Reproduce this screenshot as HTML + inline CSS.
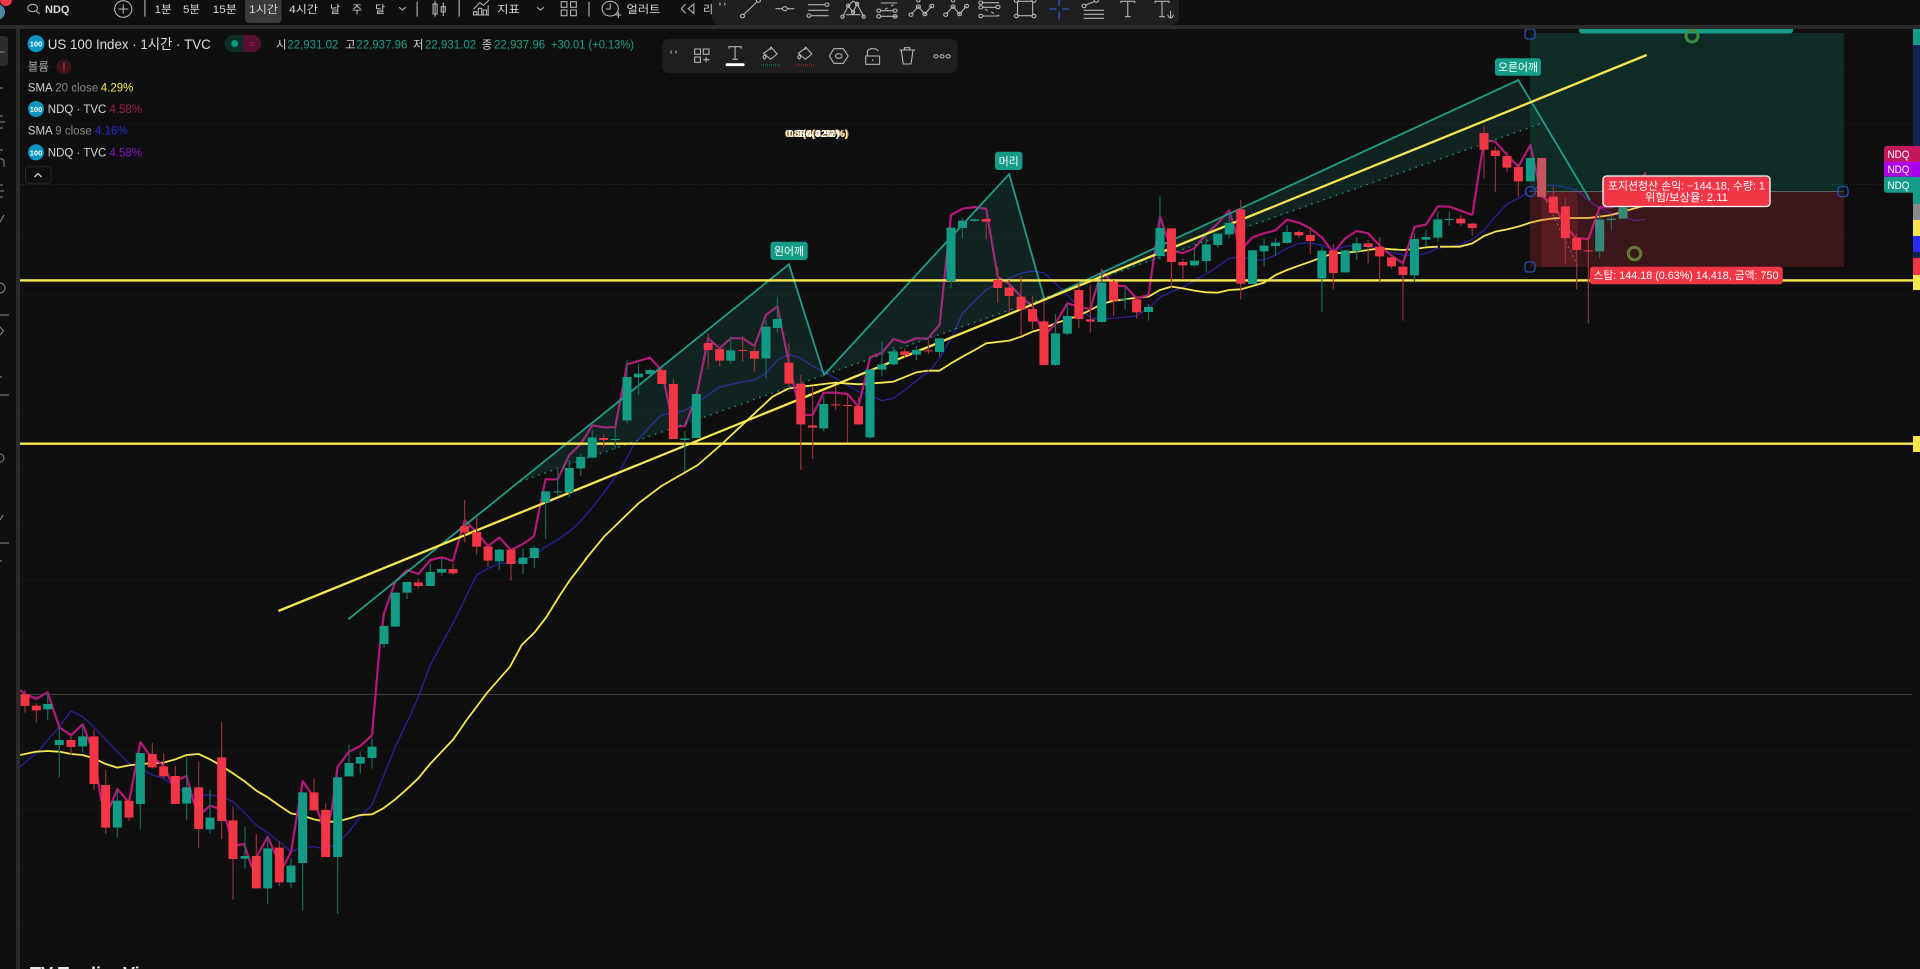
<!DOCTYPE html>
<html lang="ko"><head><meta charset="utf-8"><title>US 100 Index</title>
<style>
html,body{margin:0;padding:0;background:#0f0f0f;width:1920px;height:969px;overflow:hidden}
svg{display:block;font-family:"Liberation Sans","Noto Sans CJK KR",sans-serif}
path,polyline,circle,ellipse,rect.i{vector-effect:non-scaling-stroke}
polyline,.n{fill:none}
.gw{stroke:#17695c;stroke-width:1.2;fill:none}.gb{stroke:#129b85;stroke-width:9;fill:none}
.rw{stroke:#98303c;stroke-width:1.2;fill:none}.rb{stroke:#f23645;stroke-width:9;fill:none}
.p{stroke:#b5177c;stroke-width:2.2;stroke-linejoin:round}
.b{stroke:#2a22a8;stroke-width:1.2;stroke-linejoin:round}
.y{stroke:#f7e650;stroke-width:1.8;stroke-linejoin:round}
.ic{fill:none;stroke:#b4b4b4;stroke-width:1.1}
.t{fill:#d6d6d6;font-size:11px}
.v{fill:#1b9c85;font-size:11.5px}.k{fill:#d0d0d0;font-size:11.5px}
.w{fill:#fff;font-size:11px;text-anchor:middle}
</style></head><body>
<svg width="1920" height="969" viewBox="0 0 1920 969" xmlns="http://www.w3.org/2000/svg">
<rect width="1920" height="969" fill="#0f0f0f"/>
<!-- grid -->
<path d="M20 67H1912M20 124H1912M20 238H1912M20 295H1912M20 352H1912M20 410H1912M20 467H1912M20 523H1912M20 580H1912M20 637H1912M20 751H1912M20 809H1912M20 866H1912M20 922H1912" stroke="#161616" stroke-width="1" fill="none"/>
<path d="M20 184.500H1912" stroke="#173a32" stroke-width="1" stroke-dasharray="1 2" fill="none"/>
<path d="M20 694.500H1912" stroke="#3e3e3e" stroke-width="1" fill="none"/>

<!-- moving averages -->
<g transform="translate(0 640) scale(.33333)">
<polyline class="b" points="60,380 109,340 178,260 213,213 248,230 282,262 352,335 387,370 421,385 457,405 491,415 526,440 560,462 596,465 630,465 665,470 699,485 735,520 769,555 803,578 838,605 873,635 908,622 942,620 977,628 1013,610 1047,575 1081,530 1116,495 1150,410 1186,320 1224,240"/>
<polyline class="y" points="60,345 109,335 143,333 178,335 213,342 248,345 282,355 317,372 352,383 387,376 421,372 457,370 491,368 526,358 560,345 596,342 630,358 665,378 699,400 735,425 769,452 803,472 838,497 873,520 908,527 942,538 977,545 1013,545 1047,535 1081,525 1116,523 1150,505 1186,478 1220,448 1255,415 1290,372 1360,298 1400,240"/>
<polyline class="p" points="60,150 75,163 109,176 143,157 178,262 213,286 248,253 282,340 303,480 330,500 352,447 387,487 421,306 445,340 491,378 515,428 560,408 582,490 610,515 630,497 655,505 680,545 699,618 732,612 755,680 803,590 825,640 850,680 873,636 908,423 932,458 960,530 977,590 995,510 1013,380 1047,335 1081,318 1116,286"/>
</g>
<g transform="translate(270 480) scale(.33333)">
<polyline class="b" points="415,720 445,650 481,555 549,430 620,285 654,265 688,250 723,250 759,240 793,225 827,200 862,180 898,155 930,125 965,85 1000,40"/>
<polyline class="y" points="590,720 650,640 720,560 755,495 793,458 830,410 870,345 900,300 950,235"/>
<polyline class="p" points="306,766 310,720 330,490 342,400 376,305 411,270 445,282 481,240 515,232 549,243 584,120 620,158 654,198 688,173 723,210 759,192 793,168"/>
</g>
<g transform="translate(340 240) scale(.38271 .33333)">
<polyline class="b" points="688,760 730,695 770,610 810,560 840,525 901,512 931,490 990,442 1052,425 1083,420 1113,400 1143,360 1173,343 1204,355 1235,378 1264,395 1295,415 1326,435 1355,455 1385,465 1416,482 1446,475 1476,450 1536,395"/>
<polyline class="y" points="640,960 690,890 780,790 840,738 935,675 995,615 1060,545 1130,470 1173,445 1264,432 1295,428 1355,433 1416,428 1446,425 1506,397 1536,392"/>
<polyline class="p" points="507,888 537,718 569,718 599,645 629,612 659,556 689,562 719,562 750,373 810,353 841,392 871,560 901,558 931,470 962,295 992,325 1021,295 1052,295 1083,318 1113,225 1143,199 1173,370 1204,525 1235,525 1264,458 1295,458 1326,462 1355,500 1385,352 1416,338 1446,297 1476,308 1506,295 1536,296 1566,255"/>
</g>
<g transform="translate(920 150) scale(.38271 .33333)">
<polyline class="b" points="22,668 51,625 81,565 111,490 143,452 173,420 203,400 233,385 264,370 294,363 324,368 354,400 385,435 415,470 445,503 475,507 506,505 536,502 566,498 597,475 627,442 657,425 687,412 717,392 748,372 778,350 808,325 838,320 869,330 899,330 929,315 959,295 990,280 1020,280 1050,285 1080,300 1111,290 1141,285 1171,290 1201,295 1232,308 1262,315 1292,318 1322,310 1353,295"/>
<polyline class="y" points="22,662 51,662 81,640 111,620 143,600 173,580 233,572 264,560 294,545 324,535 354,520 385,508 415,497 445,480 475,462 506,452 536,448 566,443 597,440 627,420 657,410 687,415 717,422 748,427 778,428 808,420 838,418 869,408 899,398 929,375 959,360 990,347 1020,335 1050,322 1080,310 1111,308 1141,305 1171,300 1201,295 1232,298 1262,300 1292,297 1322,292 1353,290"/>
<polyline class="p" points="51,527 81,195 111,176 143,171 173,177 203,380 233,402 264,440 294,470 324,560 354,520 385,460 415,470 445,478 475,360 506,408 536,408 566,445 597,435 627,198 657,302 687,309 717,295 748,252 778,220 808,181 838,300 869,262 899,250 929,241 959,209 990,218 1020,235 1050,262 1080,308 1111,265 1141,243 1171,250 1201,287 1232,317 1262,340 1292,231 1322,224 1353,169 1383,170 1413,182 1443,195"/>
</g>
<g transform="translate(1440 0) scale(.33333)">
<polyline class="b" points="-7,745 60,735 97,718 132,690 166,650 201,612 235,595 271,572 305,555 340,556 376,562 410,570 445,600 479,625 514,640 549,650 583,662 618,658"/>
<polyline class="y" points="0,740 60,740 97,730 132,708 166,695 201,688 235,680 271,668 305,660 340,655 376,654 410,654 445,654 479,650 514,645 549,635 583,625 610,618"/>
<polyline class="p" points="97,646 132,420 166,425 201,465 235,500 271,435 305,590 340,610 376,680 410,715 445,717 479,622 514,622 549,610 583,560 618,517"/>
</g>

<!-- position tool -->
<rect x="1530" y="33" width="314" height="158" fill="#089981" fill-opacity=".2"/>
<rect x="1530" y="191" width="314" height="76" fill="#f23645" fill-opacity=".2"/>
<rect x="1541.700" y="191" width="35.500" height="76" fill="#f23645" fill-opacity=".16"/>
<path d="M1530 191.500H1844" stroke="#5f5f5f" fill="none"/>
<path d="M1542 192L1578 267" stroke="#8a6a6a" stroke-dasharray="2 3" fill="none"/>

<!-- head & shoulders -->
<path d="M520 481.700L789 264.300L824 375Z M824 375L1009.200 174L1044.400 299.300Z M1044.400 299.300L1518.300 80L1541.700 123.300Z" fill="#1d9b85" fill-opacity=".15"/>
<path d="M348.300 619.300L789 264.300L824 375L1009.200 174L1044.400 299.300L1518.300 80L1590 200" fill="none" stroke="#1f9d87" stroke-width="1.800"/>
<path d="M520 481.700L1541.700 123.300" fill="none" stroke="#1f9d87" stroke-width="1.300" stroke-dasharray="1.500 5"/>

<!-- horizontal lines and trend line -->
<path d="M278.300 611L1646.700 55" stroke="#f7e650" stroke-width="2.300" fill="none"/>
<rect x="20" y="279.200" width="1893" height="2.400" fill="#f7e650"/>
<rect x="20" y="442.500" width="1893" height="2.400" fill="#f7e650"/>

<!-- candles -->
<g transform="translate(0 640) scale(.33333)">
<path class="gw" d="M143 160V240M178 260V412M248 255V338M352 450V593M421 339V566M560 350V540M630 450V580M735 560V686M803 590V792M873 655V745M908 455V812M1013 410V822M1047 315V409M1081 335V400M1116 295V386"/>
<path class="rw" d="M75 150V218M109 190V248M213 285V345M282 268V450M317 390V582M387 470V543M457 308V386M491 340V415M526 378V492M596 365V624M665 246V597M699 500V778M769 582V745M838 605V738M942 415V511M977 490V651"/>
<path class="gb" d="M143 192V208M178 300V315M248 289V319M352 482V563M421 339V492M560 442V491M630 533V568M735 648V656M803 625V745M873 677V727M908 457V669M1013 412V651M1047 369V409M1081 351V371M1116 320V354"/>
<path class="rb" d="M75 163V198M109 197V211M213 300V321M282 289V432M317 435V563M387 482V533M457 342V382M491 379V409M526 408V492M596 442V567M665 352V543M699 541V657M769 648V745M838 623V727M942 457V511M977 510V651"/>
</g>
<g transform="translate(270 480) scale(.33333)">
<path class="gw" d="M342 437V502M376 338V440M411 305V357M481 252V318M515 235V287M688 205V270M759 205V282M793 198V264M827 34V177"/>
<path class="rw" d="M445 295V325M549 250V284M584 60V188M620 112V224M654 198V260M723 209V302"/>
<path class="gb" d="M342 438V492M376 338V440M411 306V338M481 276V318M515 267V278M688 209V244M759 233V252M793 204V234M827 34V67"/>
<path class="rb" d="M445 307V318M549 267V280M584 138V157M620 156V200M654 199V242M723 209V252"/>
</g>
<g transform="translate(340 240) scale(.38271 .33333)">
<path class="gw" d="M569 690V770M599 660V772M629 640V708M659 570V655M719 565V628M750 360V550M780 372V465M810 385V405M901 572V695M931 460V596M1021 290V372M1113 240V415M1143 170V278M1264 470V575M1385 388V597M1416 305V410M1446 320V375M1506 318V360"/>
<path class="rw" d="M689 580V622M841 385V432M871 418V597M962 280V388M992 320V378M1052 288V365M1083 320V395M1173 310V445M1204 405V690M1235 440V657M1295 440V510M1326 460V608M1355 470V555M1476 325V355"/>
<path class="gb" d="M569 754V757M599 684V757M629 651V685M659 592V653M719 597V600M750 411V541M780 401V412M810 390V402M901 595V600M931 462V594M1021 331V362M1113 260V355M1143 237V264M1264 492V565M1385 388V592M1416 373V389M1446 334V373M1506 330V344"/>
<path class="rb" d="M689 594V600M841 390V432M871 432V597M962 309V330M992 327V362M1052 330V333M1083 333V356M1173 368V431M1204 431V553M1235 556V563M1295 493V496M1326 495V498M1355 498V553M1476 334V345"/>
</g>
<g transform="translate(920 150) scale(.38271 .33333)">
<path class="gw" d="M51 562V620M81 232V415M111 205V265M143 205V215M354 492V648M385 460V555M475 360V518M536 408V478M597 462V512M627 140V330M717 298V350M748 255V365M778 250V292M808 190V265M869 300V402M899 265V350M929 265V318M959 225V280M1050 290V485M1111 300V368M1141 262V330M1292 250V395M1322 240V290M1353 185V275M1383 185V228"/>
<path class="rw" d="M22 570V612M173 205V268M203 352V458M233 390V488M264 378V558M294 438V538M324 455V645M415 398V535M445 405V548M506 390V498M566 440V506M657 235V415M687 325V388M838 150V448M990 240V262M1020 232V312M1080 282V418M1171 270V340M1201 262V398M1232 315V355M1262 330V512M1413 195V228M1443 218V258"/>
<path class="gb" d="M51 565V606M81 233V393M111 212V234M143 208V213M354 550V645M385 498V551M475 398V516M536 447V450M597 471V486M627 234V318M717 332V346M748 283V333M778 251V285M808 219V253M869 301V402M899 287V304M929 278V288M959 246V279M1050 302V385M1111 301V367M1141 280V304M1292 267V376M1322 261V269M1353 208V263M1383 207V210"/>
<path class="rb" d="M22 601V604M173 207V215M203 390V414M233 413V438M264 440V478M294 477V515M324 514V645M415 420V507M445 508V515M506 395V452M566 448V487M657 235V336M687 336V346M838 178V401M990 246V256M1020 255V273M1080 302V369M1171 280V291M1201 290V319M1232 322V349M1262 350V375M1413 206V220M1443 221V234"/>
</g>
<g transform="translate(1440 0) scale(.33333)">
<path class="rw" d="M132 375V535M166 440V576M201 455V515M235 490V590M340 560V640M376 595V790M410 700V868M445 720V970"/>
<path class="gw" d="M271 470V544M479 640V775M514 645V692M549 610V656"/>
<path class="gb" d="M271 474V544"/>
<path d="M479 659V754M514 656V660M549 622V656" fill="none" stroke="#36887a" stroke-width="9"/>
<path d="M305 474V591" fill="none" stroke="#c9525f" stroke-width="9"/>
<path class="rb" d="M132 399V449M166 451V468M201 468V503M235 501V544M340 590V639M376 619V714M410 713V750M445 751V754"/>
</g>

<!-- position handles -->
<g fill="#0f0f0f" fill-opacity=".3" stroke="#2352b5" stroke-width="1.300">
<rect x="1525" y="29" width="10" height="10" rx="3"/>
<rect x="1525" y="262" width="10" height="10" rx="3"/>
<rect x="1838" y="186.500" width="10" height="10" rx="3"/>
<circle cx="1530.500" cy="191.500" r="5"/>
</g>
<rect x="1579" y="24" width="214" height="9.500" rx="3" fill="#149c88"/>
<circle cx="1692" cy="36" r="6" fill="none" stroke="#3c8c3f" stroke-width="3"/>
<circle cx="1634.500" cy="253.500" r="6.200" fill="none" stroke="#5f7b36" stroke-width="3"/>

<!-- pattern labels -->
<rect x="770.500" y="241.700" width="37.200" height="18.300" rx="3" fill="#149c88"/>
<text class="w" x="789" y="255" textLength="30" lengthAdjust="spacingAndGlyphs">왼어깨</text>
<rect x="995" y="151.700" width="27.400" height="18.300" rx="3" fill="#149c88"/>
<text class="w" x="1008.700" y="165">머리</text>
<rect x="1495" y="58.300" width="46" height="17.400" rx="3" fill="#149c88"/>
<text class="w" x="1518" y="71" textLength="40" lengthAdjust="spacingAndGlyphs">오른어깨</text>

<!-- position labels -->
<rect x="1603" y="176" width="167" height="30.500" rx="3.500" fill="#f23645" stroke="#fff" stroke-width="1.300"/>
<text class="w" x="1686.500" y="189.500" textLength="157" lengthAdjust="spacingAndGlyphs">포지션청산 손익: −144.18, 수량: 1</text>
<text class="w" x="1686.500" y="201" textLength="83" lengthAdjust="spacingAndGlyphs">위험/보상율: 2.11</text>
<rect x="1589.700" y="266.700" width="193" height="17.600" rx="3" fill="#f23645"/>
<text class="w" x="1686" y="279" textLength="185" lengthAdjust="spacingAndGlyphs">스탑: 144.18 (0.63%) 14,418, 금액: 750</text>

<!-- overlapped fib text -->
<g font-size="10.500" font-weight="700" fill="#fff">
<text x="785" y="137">0.886(4.92%)</text>
<text x="786" y="137" fill="#f5b942" fill-opacity=".8">0.618(3.97%)</text>
<text x="788" y="137">0.5(4.92%)</text>
</g>

<!-- right axis -->
<rect x="1913" y="29" width="7" height="16" fill="#149c88"/>
<rect x="1913" y="45" width="7" height="101" fill="#14234d"/>
<rect x="1913" y="146" width="7" height="16" fill="#c2185b"/>
<rect x="1913" y="162" width="7" height="15" fill="#aa00ee"/>
<rect x="1913" y="177" width="7" height="27" fill="#149c88"/>
<rect x="1913" y="204" width="7" height="16" fill="#8a8a8a"/>
<rect x="1913" y="220" width="7" height="16" fill="#f7e650"/>
<rect x="1913" y="236" width="7" height="16" fill="#2a2aff"/>
<rect x="1913" y="252" width="7" height="6" fill="#14234d"/>
<rect x="1913" y="258" width="7" height="17" fill="#f23645"/>
<rect x="1913" y="275" width="7" height="15" fill="#f7e650"/>
<rect x="1913" y="436" width="7" height="16" fill="#f7e650"/>
<path d="M1913 146H1887a3 3 0 0 0-3 3V162H1913Z" fill="#c2185b"/>
<rect x="1884" y="161.700" width="29" height="15" fill="#aa00ee"/>
<path d="M1884 176.700H1913V192.700H1887a3 3 0 0 1-3-3Z" fill="#149c88"/>
<g fill="#fff" font-size="11" text-anchor="middle">
<text x="1898.500" y="158" textLength="22" lengthAdjust="spacingAndGlyphs">NDQ</text>
<text x="1898.500" y="173" textLength="22" lengthAdjust="spacingAndGlyphs">NDQ</text>
<text x="1898.500" y="189" textLength="22" lengthAdjust="spacingAndGlyphs">NDQ</text>
</g>

<!-- left toolbar -->
<rect x="0" y="25" width="16" height="944" fill="#0f0f0f"/>
<rect x="16" y="25" width="4" height="944" fill="#2b2b2b"/>
<rect x="-4" y="36" width="12" height="30" rx="3" fill="#2c2c2c"/>
<path d="M0 52H5M0 88H3M0 116H3M0 122H5M0 128H3M0 150H3M0 159a3 3 0 0 1 4 3v5M0 185H3M0 191H4M0 197H3M0 222L4 215M0 283a5 5 0 0 1 0 10M0 315H9M0 327L3.500 331L0 335M0 377H2M0 395H9M0 454a3 3 0 0 1 0 8M0 520L3 515M0 543H9M0 561H2" fill="none" stroke="#8a8a8a" stroke-width="1"/>

<!-- legend -->
<g font-size="11" text-anchor="middle" font-weight="700" fill="#fff">
<circle cx="36" cy="43.700" r="8.500" fill="#0a95c2"/><text x="36" y="46.700" font-size="7.500">100</text>
<circle cx="36" cy="109" r="8" fill="#0a95c2"/><text x="36" y="112" font-size="7.500">100</text>
<circle cx="36" cy="152.300" r="8" fill="#0a95c2"/><text x="36" y="155.300" font-size="7.500">100</text>
</g>
<text x="47.800" y="49" fill="#dcdcdc" font-size="14" textLength="163" lengthAdjust="spacingAndGlyphs">US 100 Index · 1시간 · TVC</text>
<path d="M243 35H233a8.500 8.500 0 0 0 0 17H243Z" fill="#0d2e28"/>
<path d="M243 35H252.500a8.500 8.500 0 0 1 0 17H243Z" fill="#551030"/>
<circle cx="234.700" cy="43.500" r="3.500" fill="#089981"/>
<text x="252" y="47.500" fill="#c2185b" font-size="11" text-anchor="middle">≈</text>
<text class="k" x="276" y="48.500">시</text><text class="v" x="287.300" y="48.500">22,931.02</text>
<text class="k" x="345" y="48.500">고</text><text class="v" x="356.300" y="48.500">22,937.96</text>
<text class="k" x="413" y="48.500">저</text><text class="v" x="425" y="48.500">22,931.02</text>
<text class="k" x="481.600" y="48.500">종</text><text class="v" x="494" y="48.500">22,937.96</text>
<text class="v" x="551" y="48.500" textLength="83" lengthAdjust="spacingAndGlyphs">+30.01 (+0.13%)</text>
<text x="27.800" y="70.500" fill="#a8a8a8" font-size="11.500">볼륨</text>
<circle cx="64" cy="66.700" r="7.500" fill="#3a1418"/>
<text x="64" y="70.700" fill="#b52a30" font-size="11" font-weight="700" text-anchor="middle">!</text>
<text x="27.800" y="91.300" font-size="11.500" fill="#d0d0d0">SMA <tspan fill="#8a8a8a">20 close</tspan></text>
<text x="100.800" y="91.300" font-size="11.500" fill="#f7e650">4.29%</text>
<text x="47.800" y="113" font-size="11.500" fill="#d6d6d6">NDQ · TVC</text>
<text x="109.400" y="113" font-size="11.500" fill="#a31a52">4.58%</text>
<text x="27.800" y="134.700" font-size="11.500" fill="#d0d0d0">SMA <tspan fill="#8a8a8a">9 close</tspan></text>
<text x="95" y="134.700" font-size="11.500" fill="#2a2ad0">4.16%</text>
<text x="47.800" y="156.300" font-size="11.500" fill="#d6d6d6">NDQ · TVC</text>
<text x="109.400" y="156.300" font-size="11.500" fill="#8a10c8">4.58%</text>
<rect x="25.500" y="166.700" width="25.500" height="16.500" rx="3" fill="#0f0f0f" stroke="#2a2a2a"/>
<path d="M34.500 177L38 173.500L41.500 177" class="n" stroke="#c8c8c8" stroke-width="1.300"/>

<!-- top bar -->
<rect x="0" y="0" width="1920" height="25" fill="#0f0f0f"/>
<rect x="0" y="25" width="1920" height="4" fill="#2b2b2b"/>
<circle cx="-3" cy="12" r="8" fill="#50819f"/>
<circle cx="6" cy="0" r="6" fill="#f23645"/>
<rect x="245" y="-4" width="36.600" height="27" rx="4" fill="#3a3a3a"/>
<g class="t" fill="#d6d6d6">
<text class="t" x="45" y="13" font-weight="700" font-size="12">NDQ</text>
<text class="t" x="154.700" y="13" textLength="17" lengthAdjust="spacingAndGlyphs">1분</text>
<text class="t" x="183" y="13" textLength="17" lengthAdjust="spacingAndGlyphs">5분</text>
<text class="t" x="212.700" y="13" textLength="24" lengthAdjust="spacingAndGlyphs">15분</text>
<text class="t" x="249" y="13" textLength="29" lengthAdjust="spacingAndGlyphs">1시간</text>
<text class="t" x="289" y="13" textLength="29" lengthAdjust="spacingAndGlyphs">4시간</text>
<text class="t" x="330" y="13">날</text><text class="t" x="352" y="13">주</text><text class="t" x="375" y="13">달</text>
<text class="t" x="497" y="13" textLength="23" lengthAdjust="spacingAndGlyphs">지표</text>
<text class="t" x="626.500" y="13" textLength="34" lengthAdjust="spacingAndGlyphs">얼러트</text>
<text class="t" x="703" y="13">리</text>
</g>
<g transform="scale(.40816 .33333)" class="ic">
<ellipse cx="80" cy="24" rx="12" ry="11" class="ic" stroke-width="1.300"/><path class="ic" stroke-width="1.300" d="M89 33L97 42"/>
<ellipse cx="302" cy="27" rx="21" ry="25" class="ic"/><path class="ic" d="M290 27H314M302 13V41"/>
<path class="ic" d="M355 0V50M1022 5V50M1125 0V50M1443 5V50"/>
<path class="ic" d="M978 22L986 30L994 22M1316 22L1324 30L1332 22"/>
<path class="ic" d="M1066 2V50M1061 12H1071V42H1061ZM1086 8V48M1081 20H1091V36H1081Z"/>
<path class="ic" d="M1160 45V35H1168V45ZM1172 45V25H1180V45ZM1184 45V30H1192V45ZM1196 45V16M1160 45H1198M1160 28L1175 8L1185 16L1198 0"/>
<path class="ic" d="M1375 5H1389V22H1375ZM1398 5H1412V22H1398ZM1375 30H1389V47H1375ZM1398 30H1412V47H1398Z"/>
<ellipse cx="1495" cy="26" rx="20" ry="22" class="ic"/><path class="ic" d="M1495 10V27H1484M1508 45H1522M1515 36V54"/>
</g>
<g transform="translate(640 0) scale(.40816 .33333)">
<path class="ic" d="M101 26L112 12M101 26L112 40M118 26L132 12V40Z"/>
</g>

<!-- floating drawing toolbar -->
<path d="M712 0H1179V17a8 8 0 0 1-8 8H720a8 8 0 0 1-8-8Z" fill="#1f1f1f"/>
<g transform="translate(640 0) scale(.40816 .33333)" class="ic">
<path class="ic" stroke-dasharray="3 9" stroke="#666" d="M196 8V44M208 8V44"/>
<path class="ic" d="M254 44L286 6"/><ellipse cx="251" cy="48" rx="5" ry="5" class="ic"/><ellipse cx="290" cy="2" rx="5" ry="5" class="ic"/>
<path class="ic" d="M332 26H348M362 26H378"/><ellipse cx="355" cy="26" rx="6" ry="6" class="ic"/>
<path class="ic" d="M412 14H452M412 31H462M420 47H462"/><ellipse cx="458" cy="14" rx="5" ry="5" class="ic"/><ellipse cx="414" cy="47" rx="5" ry="5" class="ic"/>
<path class="ic" d="M497 50L510 18L522 36L532 12L548 50M505 44H540M522 3L510 18M522 3L532 12"/><ellipse cx="496" cy="50" rx="4" ry="5" class="ic"/><ellipse cx="548" cy="50" rx="4" ry="5" class="ic"/><ellipse cx="522" cy="36" rx="4" ry="5" class="ic"/><ellipse cx="510" cy="17" rx="4" ry="5" class="ic"/><ellipse cx="532" cy="12" rx="4" ry="5" class="ic"/>
<path class="ic" d="M590 9H630M590 32H620M590 49H630"/><path class="ic" stroke-dasharray="3 4" d="M600 28L628 10"/><ellipse cx="585" cy="32" rx="5" ry="5" class="ic"/><ellipse cx="625" cy="32" rx="5" ry="5" class="ic"/><ellipse cx="585" cy="49" rx="5" ry="5" class="ic"/><ellipse cx="625" cy="49" rx="5" ry="5" class="ic"/>
<path class="ic" d="M665 42L682 20L698 42L715 18"/><ellipse cx="664" cy="44" rx="5" ry="5" class="ic"/><ellipse cx="682" cy="20" rx="5" ry="5" class="ic"/><ellipse cx="698" cy="42" rx="5" ry="5" class="ic"/><ellipse cx="715" cy="18" rx="5" ry="5" class="ic"/><ellipse cx="682" cy="2" rx="4" ry="4" class="ic"/>
<path class="ic" d="M750 42L767 20L783 42L800 18"/><ellipse cx="749" cy="44" rx="5" ry="5" class="ic"/><ellipse cx="767" cy="20" rx="5" ry="5" class="ic"/><ellipse cx="783" cy="42" rx="5" ry="5" class="ic"/><ellipse cx="800" cy="18" rx="5" ry="5" class="ic"/><ellipse cx="767" cy="2" rx="4" ry="4" class="ic"/>
<path class="ic" d="M838 8H880M838 22H872M838 48H880"/><path class="ic" stroke-dasharray="3 4" d="M845 28L880 47"/><ellipse cx="835" cy="8" rx="5" ry="5" class="ic"/><ellipse cx="877" cy="21" rx="5" ry="5" class="ic"/><ellipse cx="835" cy="22" rx="5" ry="5" class="ic"/><ellipse cx="835" cy="48" rx="5" ry="5" class="ic"/>
<path class="ic" d="M925 4H962V47H925Z"/><ellipse cx="922" cy="2" rx="5" ry="5" class="ic"/><ellipse cx="965" cy="2" rx="5" ry="5" class="ic"/><ellipse cx="922" cy="48" rx="5" ry="5" class="ic"/><ellipse cx="965" cy="48" rx="5" ry="5" class="ic"/>
<path d="M1027 0V18M1027 35V58M1003 27H1020M1035 27H1052" fill="none" stroke="#2a4ab4" stroke-width="1.600"/>
<path class="ic" d="M1092 15L1114 4M1087 31H1137M1087 43H1137M1087 55H1137"/><ellipse cx="1088" cy="18" rx="5" ry="5" class="ic"/><ellipse cx="1118" cy="2" rx="5" ry="5" class="ic"/>
<path class="ic" d="M1178 9V4H1212V9M1195 4V50M1188 50H1202"/>
<path class="ic" d="M1262 9V4H1296V9M1279 4V50M1272 50H1286M1300 32V54M1293 44Q1295 54 1300 54Q1305 54 1307 44"/>
</g>

<!-- selected text toolbar -->
<rect x="662.400" y="39" width="295.200" height="34" rx="6" fill="#1e1e1e"/>
<rect x="725.700" y="63.300" width="18.800" height="2.800" rx="1" fill="#fff"/>
<path d="M761 65H780" stroke="#0b5c4d" stroke-width="2.500" stroke-dasharray="1 1" fill="none"/>
<path d="M795 65H814" stroke="#7c1a26" stroke-width="2.500" stroke-dasharray="1 1" fill="none"/>
<g transform="translate(640 0) scale(.40816 .33333)">
<path class="ic" stroke="#666" stroke-dasharray="3 9" d="M76 152V186M88 152V186"/>
<path class="ic" d="M134 147H148V163H134ZM155 147H169V163H155ZM134 171H148V187H134ZM155 179H170M162 171V187"/>
<path class="ic" d="M218 146V140H248V146M233 140V178M226 178H240"/>
<path class="ic" d="M322 143L336 162L320 178L303 160ZM320 140V150M305 165Q298 172 305 177Q312 172 305 165Z"/>
<path class="ic" d="M407 143L421 162L405 178L388 160ZM405 140V150M390 165Q383 172 390 177Q397 172 390 165Z"/>
<path class="ic" d="M464 168L475 146H498L510 168L498 190H475Z"/><ellipse cx="487" cy="168" rx="8" ry="7" class="ic"/>
<path class="ic" d="M553 168H587V193H553ZM557 168V157Q557 146 570 146Q580 146 584 153M570 178V183"/>
<path class="ic" d="M636 150H674M648 150V143H661V150M640 150L645 192H664L669 150Z"/>
<ellipse cx="725" cy="169" rx="5" ry="5" class="ic"/><ellipse cx="740" cy="169" rx="5" ry="5" class="ic"/><ellipse cx="755" cy="169" rx="5" ry="5" class="ic"/>
</g>

<!-- clipped watermark -->
<text x="30" y="980" fill="#e8e8e8" font-size="18" font-weight="700">TV TradingView</text>
</svg>
</body></html>
